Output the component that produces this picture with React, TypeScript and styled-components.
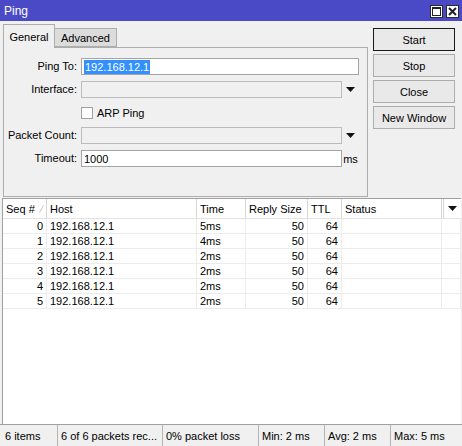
import React from "react";
import styled, { createGlobalStyle } from "styled-components";

const GlobalStyle = createGlobalStyle`
  html, body {
    margin: 0;
    padding: 0;
    background: #f0f0f0;
  }

  body {
    font-family: "Liberation Sans", Arial, sans-serif;
    font-size: 11px;
    color: #000;
  }
`;

const Window = styled.div`
  width: 462px;
  height: 446px;
  display: flex;
  flex-direction: column;
  background: #f0f0f0;
  overflow: hidden;
`;

const TitleBar = styled.div`
  height: 21px;
  flex: none;
  display: flex;
  align-items: center;
  justify-content: space-between;
  padding: 0 3px 0 4px;
  background: #4a4ac6;
  color: #fff;
  font-size: 12px;
`;

const TitleButtons = styled.div`
  display: flex;
  gap: 3px;
  margin-top: 1px;
`;

const TitleButton = styled.div`
  width: 13px;
  height: 13px;
  box-sizing: border-box;
  border: 1px solid #2a2a2a;
  background: #fff;
  display: flex;
  align-items: center;
  justify-content: center;
`;

const Top = styled.div`
  height: 177px;
  flex: none;
  display: flex;
  padding: 3px 0 0 3px;
  box-sizing: border-box;
`;

const TabArea = styled.div`
  width: 365px;
  display: flex;
  flex-direction: column;
`;

const TabRow = styled.div`
  height: 23px;
  display: flex;
  align-items: flex-end;
`;

const Tab = styled.div<{ $active?: boolean }>`
  box-sizing: border-box;
  height: ${(p) => (p.$active ? "24px" : "19px")};
  margin-bottom: ${(p) => (p.$active ? "-1px" : "0")};
  width: ${(p) => (p.$active ? "52px" : "62px")};
  border: 1px solid #adadad;
  border-bottom: ${(p) => (p.$active ? "none" : "1px solid #adadad")};
  border-left: ${(p) => (p.$active ? "1px solid #adadad" : "none")};
  background: ${(p) => (p.$active ? "#f0f0f0" : "#dcdcdc")};
  display: flex;
  align-items: center;
  justify-content: center;
  position: relative;
  z-index: ${(p) => (p.$active ? 1 : 0)};
`;

const Panel = styled.div`
  height: 150px;
  box-sizing: border-box;
  border: 1px solid #adadad;
  padding-top: 10px;
`;

const Form = styled.div`
  display: grid;
  grid-template-columns: 77px 261px 17px;
  grid-auto-rows: 17px;
  row-gap: 6px;
`;

const Label = styled.div`
  text-align: right;
  padding-right: 4px;
  line-height: 17px;
  white-space: nowrap;
`;

const Field = styled.div<{ $wide?: boolean; $disabled?: boolean }>`
  grid-column: ${(p) => (p.$wide ? "2 / span 2" : "2")};
  box-sizing: border-box;
  height: 17px;
  border: 1px solid ${(p) => (p.$disabled ? "#bcbcbc" : "#a5a5a5")};
  background: ${(p) => (p.$disabled ? "#f0f0f0" : "#fff")};
  padding-left: 2px;
  display: flex;
  align-items: center;
`;

const Selected = styled.span`
  background: #3390ff;
  color: #fff;
  padding: 0 1px;
  line-height: 14px;
`;

const Suffix = styled.div`
  display: flex;
  align-items: center;
  justify-content: center;
`;

const CheckRow = styled.div`
  grid-column: 2 / span 2;
  display: flex;
  align-items: center;
  gap: 4px;
`;

const CheckBox = styled.div`
  width: 12px;
  height: 12px;
  box-sizing: border-box;
  border: 1px solid #a0a0a0;
  background: #fff;
`;

const Buttons = styled.div`
  width: 82px;
  margin-left: 5px;
  padding-top: 4px;
  display: flex;
  flex-direction: column;
  gap: 3px;
`;

const Button = styled.div<{ $default?: boolean }>`
  height: 23px;
  box-sizing: border-box;
  border: 1px solid ${(p) => (p.$default ? "#1a1a1a" : "#adadad")};
  background: #e9e9e9;
  display: flex;
  align-items: center;
  justify-content: center;
  white-space: nowrap;
`;

const Table = styled.div`
  flex: 1;
  margin: 0 1px 0 2px;
  border-top: 1px solid #a0a0a0;
  border-left: 1px solid #a0a0a0;
  background: #fff;
`;

const columns = "44px 150px 49px 62px 34px 100px 1fr";

const HeaderRow = styled.div`
  display: grid;
  grid-template-columns: ${columns};
  height: 19px;
  border-bottom: 1px solid #e3e3e3;
`;

const HeaderCell = styled.div`
  border-right: 1px solid #d6d6d6;
  padding-left: 3px;
  display: flex;
  align-items: center;
  gap: 4px;
  white-space: nowrap;
  overflow: hidden;

  &:last-child {
    border-right: none;
    border-left: 1px solid #d6d6d6;
    margin-left: 1px;
    justify-content: center;
    padding-left: 0;
  }
`;

const Row = styled.div`
  display: grid;
  grid-template-columns: ${columns};
  height: 15px;
  box-sizing: border-box;
  border-bottom: 1px solid #ececec;
`;

const Cell = styled.div<{ $right?: boolean }>`
  border-right: 1px solid #ececec;
  padding: 0 3px;
  text-align: ${(p) => (p.$right ? "right" : "left")};
  line-height: 14px;
  white-space: nowrap;
  overflow: hidden;
`;

const StatusBar = styled.div`
  height: 22px;
  flex: none;
  display: flex;
  padding-left: 2px;
  border-top: 1px solid #a0a0a0;
  box-sizing: border-box;
`;

const StatusItem = styled.div<{ $w: number }>`
  width: ${(p) => p.$w}px;
  box-sizing: border-box;
  border-right: 1px solid #b4b4b4;
  padding-left: 3px;
  display: flex;
  align-items: center;
  white-space: nowrap;

  &:last-child {
    border-right: none;
  }
`;

function DownArrow() {
  return (
    <svg width="9" height="5" viewBox="0 0 9 5">
      <path d="M0 0 H9 L4.5 5 Z" fill="#111" />
    </svg>
  );
}

const rows = [
  { seq: 0, time: "5ms" },
  { seq: 1, time: "4ms" },
  { seq: 2, time: "2ms" },
  { seq: 3, time: "2ms" },
  { seq: 4, time: "2ms" },
  { seq: 5, time: "2ms" },
];

const status: [string, number][] = [
  ["6 items", 56],
  ["6 of 6 packets rec...", 105],
  ["0% packet loss", 96],
  ["Min: 2 ms", 66],
  ["Avg: 2 ms", 66],
  ["Max: 5 ms", 69],
];

export default function App() {
  return (
    <>
      <GlobalStyle />
      <Window>
        <TitleBar>
          <span>Ping</span>
          <TitleButtons>
            <TitleButton>
              <svg width="9" height="9" viewBox="0 0 9 9">
                <rect x="0.5" y="0.5" width="8" height="8" fill="none" stroke="#222" />
                <rect x="0" y="0" width="9" height="2" fill="#222" />
              </svg>
            </TitleButton>
            <TitleButton>
              <svg width="9" height="9" viewBox="0 0 9 9">
                <path d="M1 1 L8 8 M8 1 L1 8" stroke="#222" strokeWidth="2" />
              </svg>
            </TitleButton>
          </TitleButtons>
        </TitleBar>

        <Top>
          <TabArea>
            <TabRow>
              <Tab $active>General</Tab>
              <Tab>Advanced</Tab>
            </TabRow>
            <Panel>
              <Form>
                <Label>Ping To:</Label>
                <Field $wide>
                  <Selected>192.168.12.1</Selected>
                </Field>

                <Label>Interface:</Label>
                <Field $disabled />
                <Suffix>
                  <DownArrow />
                </Suffix>

                <div />
                <CheckRow>
                  <CheckBox />
                  ARP Ping
                </CheckRow>

                <Label>Packet Count:</Label>
                <Field $disabled />
                <Suffix>
                  <DownArrow />
                </Suffix>

                <Label>Timeout:</Label>
                <Field>1000</Field>
                <Suffix>ms</Suffix>
              </Form>
            </Panel>
          </TabArea>

          <Buttons>
            <Button $default>Start</Button>
            <Button>Stop</Button>
            <Button>Close</Button>
            <Button>New Window</Button>
          </Buttons>
        </Top>

        <Table>
          <HeaderRow>
            <HeaderCell>
              Seq #
              <svg width="5" height="8" viewBox="0 0 5 8">
                <path d="M0.5 7.5 L4.5 0.5" stroke="#c4c4c4" fill="none" />
              </svg>
            </HeaderCell>
            <HeaderCell>Host</HeaderCell>
            <HeaderCell>Time</HeaderCell>
            <HeaderCell>Reply Size</HeaderCell>
            <HeaderCell>TTL</HeaderCell>
            <HeaderCell>Status</HeaderCell>
            <HeaderCell>
              <DownArrow />
            </HeaderCell>
          </HeaderRow>
          {rows.map((r) => (
            <Row key={r.seq}>
              <Cell $right>{r.seq}</Cell>
              <Cell>192.168.12.1</Cell>
              <Cell>{r.time}</Cell>
              <Cell $right>50</Cell>
              <Cell $right>64</Cell>
              <Cell />
              <Cell />
            </Row>
          ))}
        </Table>

        <StatusBar>
          {status.map(([text, w]) => (
            <StatusItem key={text} $w={w}>
              {text}
            </StatusItem>
          ))}
        </StatusBar>
      </Window>
    </>
  );
}
